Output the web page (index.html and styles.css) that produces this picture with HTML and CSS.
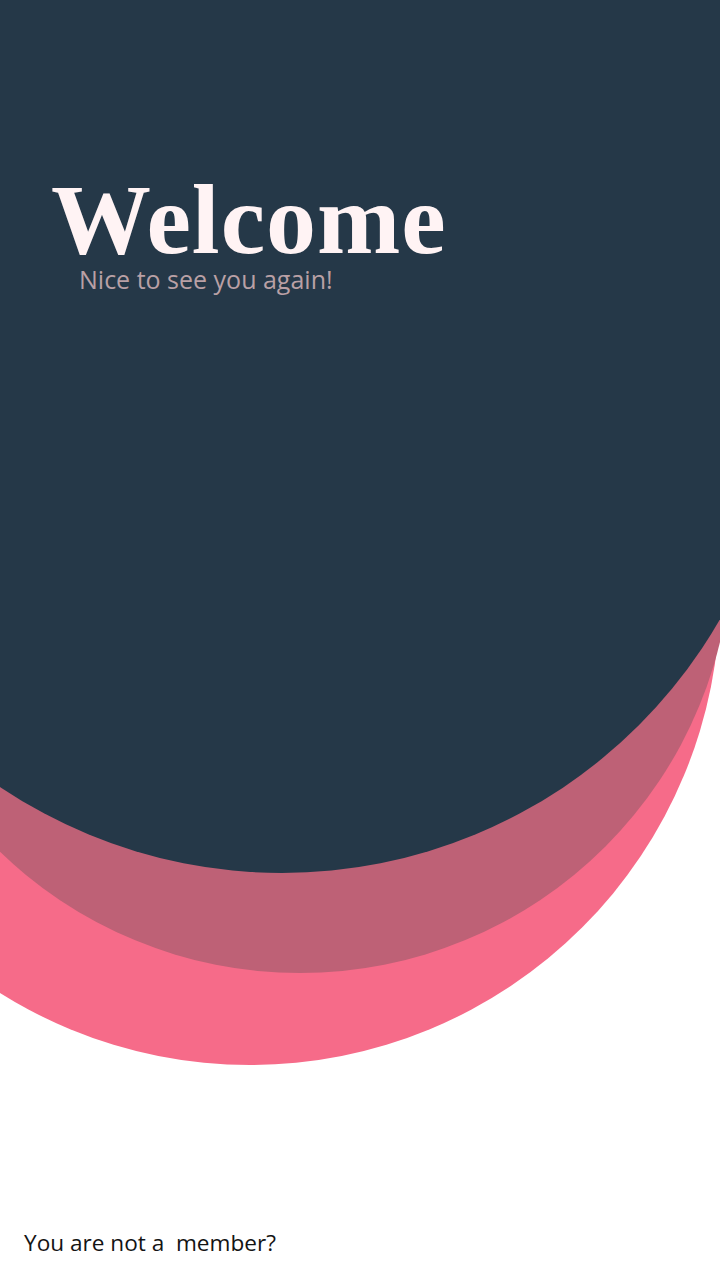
FILE: index.html
```html
<!DOCTYPE html>
<html lang="en">
<head>
<meta charset="utf-8">
<title>Welcome</title>
<link rel="stylesheet" href="styles.css">
</head>
<body>
<div class="screen">
  <div class="backdrop" aria-hidden="true">
    <div class="blob blob-pink"></div>
    <div class="blob blob-mauve"></div>
    <div class="blob blob-navy"></div>
  </div>
  <header class="hero">
    <h1 class="hero-title">Welcome</h1>
    <p class="hero-sub">Nice to see you again!</p>
  </header>
  <footer class="footer">
    <p class="footer-text">You are not a&nbsp; member?</p>
  </footer>
</div>
</body>
</html>
```

FILE: styles.css
```css
html, body {
  margin: 0;
  padding: 0;
  background: #ffffff;
}

.screen {
  position: relative;
  width: 720px;
  height: 1280px;
  overflow: hidden;
  display: flex;
  flex-direction: column;
  background: #ffffff;
}

.backdrop {
  position: absolute;
  inset: 0;
  z-index: 0;
}

.blob {
  position: absolute;
  border-radius: 50%;
}

.blob-pink {
  left: -220px;
  top: 125px;
  width: 940px;
  height: 940px;
  background: #f66b89;
}

.blob-mauve {
  left: -132px;
  top: 109px;
  width: 864px;
  height: 864px;
  background: #be6176;
}

.blob-navy {
  left: -223px;
  top: 0;
  width: 1010px;
  height: 873px;
  border-radius: 0 0 505px 505px;
  background: #253848;
}

.hero {
  position: relative;
  z-index: 1;
  padding: 174px 0 0 51px;
}

.hero-title {
  margin: 0;
  font-family: "Liberation Serif", "Times New Roman", serif;
  font-weight: 700;
  font-size: 100px;
  line-height: 92px;
  letter-spacing: 1px;
  color: #fff3f4;
}

.hero-sub {
  margin: 0 0 0 28px;
  font-family: "Open Sans", "Noto Sans", sans-serif;
  font-size: 25px;
  line-height: 26px;
  color: #b9a0a5;
}

.footer {
  position: relative;
  z-index: 1;
  margin-top: auto;
  padding: 0 0 22px 24px;
}

.footer-text {
  margin: 0;
  font-family: "Open Sans", "Noto Sans", sans-serif;
  font-size: 22.6px;
  line-height: 30px;
  color: #141414;
}
```
